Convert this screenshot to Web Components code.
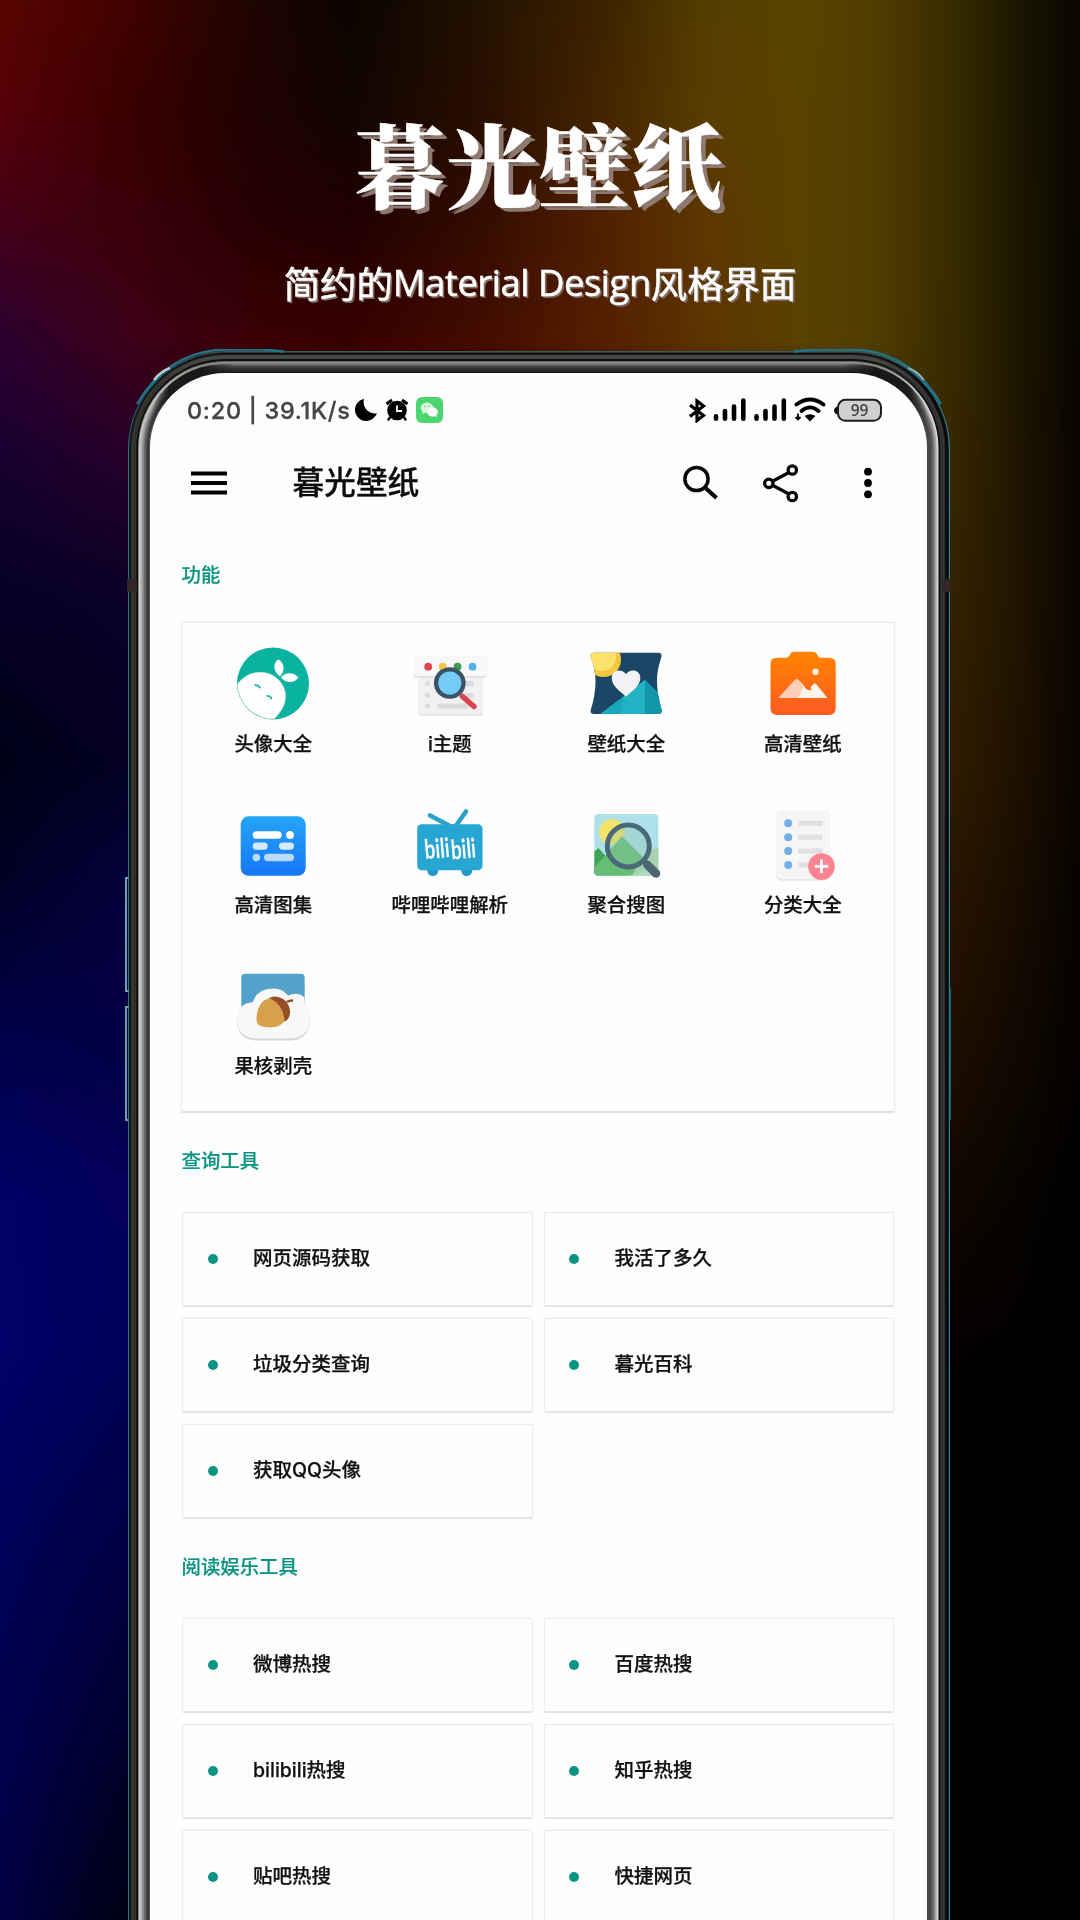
<!DOCTYPE html>
<html lang="zh-CN">
<head>
<meta charset="utf-8">
<title>暮光壁纸</title>
<style>
html,body{margin:0;padding:0;background:#000}
body{width:1080px;height:1920px;overflow:hidden;font-family:Inter,"Noto Sans CJK SC",sans-serif;color:#111}
</style>
</head>
<body>
<promo-page>
  <promo-title slot="title">暮光壁纸</promo-title>
  <promo-subtitle slot="subtitle"></promo-subtitle>
  <phone-frame slot="phone">
    <status-bar></status-bar>
    <app-bar>暮光壁纸</app-bar>
    <section-title style="--h:103px;--pad:44.5px">功能</section-title>
    <feature-card>
      <feature-item icon="avatar">头像大全</feature-item>
      <feature-item icon="theme">i主题</feature-item>
      <feature-item icon="wallpaper">壁纸大全</feature-item>
      <feature-item icon="hd">高清壁纸</feature-item>
      <feature-item icon="album">高清图集</feature-item>
      <feature-item icon="bili">哔哩哔哩解析</feature-item>
      <feature-item icon="search">聚合搜图</feature-item>
      <feature-item icon="list">分类大全</feature-item>
      <feature-item icon="acorn">果核剥壳</feature-item>
    </feature-card>
    <section-title style="--h:99px">查询工具</section-title>
    <tool-grid>
      <tool-card>网页源码获取</tool-card><tool-card>我活了多久</tool-card>
      <tool-card>垃圾分类查询</tool-card><tool-card>暮光百科</tool-card>
      <tool-card>获取QQ头像</tool-card>
    </tool-grid>
    <section-title style="--h:99px">阅读娱乐工具</section-title>
    <tool-grid>
      <tool-card>微博热搜</tool-card><tool-card>百度热搜</tool-card>
      <tool-card>bilibili热搜</tool-card><tool-card>知乎热搜</tool-card>
      <tool-card>贴吧热搜</tool-card><tool-card>快捷网页</tool-card>
    </tool-grid>
  </phone-frame>
</promo-page>
<script>
const define=(name,html,setup)=>customElements.define(name,class extends HTMLElement{
  constructor(){super();this.attachShadow({mode:'open'}).innerHTML=typeof html==='function'?html(this):html;if(setup)setup(this.shadowRoot,this);}
});

/* Aurora backdrop: colour samples on a coarse grid, smoothly interpolated */
const GX=[0,130,260,350,480,600,700,800,880,950,1020,1080];
const G=[
[0,'580400 400200 1c0500 0c0300 221200 3c2200 543c00 5a4400 4e3c00 382c00 1a1600 080600'],
[110,'560008 380000 1e0200 120500 280e00 442400 583c00 5a4200 4e3c00 382c00 1a1600 080600'],
[220,'440018 3a0008 260000 200000 340c00 502000 5c3600 5a4200 4e3c00 382c00 1c1600 080600'],
[340,'2c0030 3c0018 3a0004 380000 440c00 541e00 5c3400 5a4200 4e3c00 382a00 1c1600 080500'],
[450,'180030 280028 200010 200000 200000 200000 200000 200000 402c00 382800 1e1400 080400'],
[600,'040026 0a0028 0 0 0 0 0 0 302000 342200 201400 080400'],
[760,'000016 030024 0 0 0 0 0 0 281400 301c00 1e1000 080400'],
[900,'00002a 06003c 0 0 0 0 0 0 201000 281400 180c00 060200'],
[1050,'00004c 040046 0 0 0 0 0 0 180800 1e0e00 100700 040100'],
[1200,'000066 02005a 0 0 0 0 0 0 0c0400 100600 060300 000000'],
[1350,'000068 000058 0 0 0 0 0 0 0 040000 020000 0'],
[1500,'00005c 000048 0 0 0 0 0 0 0 0 0 0'],
[1700,'000050 000030 0 0 0 0 0 0 0 0 0 0'],
[1920,'000042 000012 0 0 0 0 0 0 0 0 0 0']
].map(([y,s])=>[y,s.split(' ').map(h=>{const n=parseInt(h,16);return[n>>16,(n>>8)&255,n&255];})]);
function paintAurora(cv){
  const w=cv.width,h=cv.height,k=1080/w,ctx=cv.getContext('2d'),im=ctx.createImageData(w,h);
  const at=(arr,v)=>{let i=0;while(i<arr.length-2&&v>=arr[i+1])i++;return[i,(v-arr[i])/(arr[i+1]-arr[i])];};
  const ys=G.map(g=>g[0]);
  for(let y=0;y<h;y++){const[j,v]=at(ys,y*k);
    for(let x=0;x<w;x++){const[i,u]=at(GX,x*k),o=(y*w+x)*4;
      for(let c=0;c<3;c++){
        const a=G[j][1][i][c]*(1-u)+G[j][1][i+1][c]*u,b=G[j+1][1][i][c]*(1-u)+G[j+1][1][i+1][c]*u;
        im.data[o+c]=a*(1-v)+b*v;}
      im.data[o+3]=255;}}
  ctx.putImageData(im,0,0);
}
define('promo-page',`<style>
:host{display:grid;width:1080px;height:1920px;overflow:hidden}
canvas,.col{grid-area:1/1;width:1080px;height:1920px}
.col{display:flex;flex-direction:column;align-items:center;z-index:1}
</style><canvas width="540" height="960"></canvas><div class="col"><slot name="title"></slot><slot name="subtitle"></slot><slot name="phone"></slot></div>`,
r=>paintAurora(r.querySelector('canvas')));

define('promo-title',`<style>
:host{display:block;height:115px;padding-top:105px;margin:0 2px 4px 0;font:900 90.500px/115px "Noto Serif CJK SC","Noto Sans CJK SC",serif;color:#fff;white-space:nowrap;letter-spacing:1.800px;-webkit-text-stroke:.6px #fff;text-shadow:5px 4px #8d7970,3px 3px rgba(141,121,112,.55)}
</style><slot></slot>`);
define('promo-subtitle',`<style>
:host{display:flex;height:46px;padding-top:35px;font:400 36.400px/46px "Noto Sans CJK SC",sans-serif;color:#fff;white-space:pre;-webkit-text-stroke:.5px #fff;text-shadow:1px 1px #8a7468,2px 2px #7a665c;margin-bottom:42px}
.en{font-family:"Open Sans","Noto Sans",sans-serif;letter-spacing:-.450px}
</style><span>简约的</span><span class="en">Material Design</span><span>风格界面</span>`);

/* Phone bezel: one filled contour per pixel ring, shaded [side left, top, side right] */
const L='2a7080 0a1416 161c1a 2a2c26 3a3a30 34332c 2e2c28 35332f 1a1818 050505 8a8a8a c8c8c8 bebebe aeaeae 9a9a9a 848484 6e6e6e 5c5c5c 4c4c4c 404040 343434 555555'.split(' ');
const T='405a58 303432 0a0a0a 202020 40403c 4a4a46 4a4a46 40403c 101010 0a0a0a 6a6a66 8a8c88 848682 70726e 5c5c5a 4a4a48 3c3c3c 343434 303030 2c2c2c 242424 141414'.split(' ');
const R='2f8296 0e2028 050507 0a0a0a 161616 333333 3a3a3a 262626 3a3a3a 1a1a1a 060606 e0e0e0 c8c8c8 acacac 929292 7a7a7a 666666 585858 4c4c4c 484848 464646 484848'.split(' ');
const bezel=()=>{
  let defs='',body='';
  for(let i=0;i<22;i++){
    const d=i>12?'<stop offset=".05" stop-color="#1c1c1c"/><stop offset=".09" stop-color="#161616"/>':'',
          e2=i>12?'<stop offset=".91" stop-color="#161616"/><stop offset=".95" stop-color="#1c1c1c"/>':'',
          s=i>12?'.028':'.03',t=i>12?'.972':'.97',m=i>12?.13:.09;
    defs+=`<linearGradient id="g${i}" gradientUnits="userSpaceOnUse" x1="128" x2="950" y1="0" y2="0"><stop offset="${s}" stop-color="#${L[i]}"/>${d}<stop offset="${m}" stop-color="#${T[i]}"/><stop offset="${1-m}" stop-color="#${T[i]}"/>${e2}<stop offset="${t}" stop-color="#${R[i]}"/></linearGradient>`;
    const x=128+i,y=351+i,e=950-i*23/22,r=98-i*1.1;
    body+=`<path d="M${x} 1930V${y+r}A${r} ${r} 0 0 1 ${x+r} ${y}H${e-r}A${r} ${r} 0 0 1 ${e} ${y+r}V1930Z" fill="url(#g${i})"/>`;
  }
  return `<svg width="1080" height="1571" viewBox="0 349 1080 1571"><defs>${defs}</defs>${body}
  <g fill="none" stroke="#1f7488" stroke-width="2.400"><path d="M137 404C159 367 190 349.500 228 349.500H264L284 351.500"/><path d="M941 404C919 367 888 349.500 850 349.500H814L794 351.500"/></g>
  <g fill="none" stroke="#6aa3ae" stroke-width="2" ><path d="M128.500 878H126V991H128.500M128.500 1007H126V1120H128.500"/></g>
  <path d="M154 380Q161 371 170 368" stroke="#b4cccf" stroke-width="2.500" fill="none"/><path d="M924 380Q917 371 908 368" stroke="#8fb4b8" stroke-width="2" fill="none"/>
  <path d="M127 579h10v13h-10zM943 579h7v13h-7z" fill="#332626"/>
  <path d="M950.500 988V1120" stroke="#1c5562" stroke-width="1.200"/></svg>`;
};
define('phone-frame',()=>`<style>
:host{display:grid;width:1080px;height:1571px;flex:none;margin-top:2px;grid-template-columns:150px 777px 153px;overflow:hidden}
svg{grid-area:1/1/2/4;display:block;overflow:visible}
.screen{grid-area:1/2;margin-top:24px;height:1547px;background:#fefefe;border-radius:75px 75px 0 0;z-index:1;overflow:hidden;display:flex;flex-direction:column}
</style>${bezel()}<div class="screen"><slot></slot></div>`);

define('status-bar',`<style>
:host{display:flex;height:74px;align-items:center;padding:0 44px 0 37px;box-sizing:border-box;flex:none;justify-content:space-between}
div{display:flex;align-items:center}
.t{font:500 23.500px/30px Inter,sans-serif;color:#444;width:168px;white-space:nowrap;letter-spacing:.700px;-webkit-text-stroke:.3px #444;padding-top:1px}
svg{display:block;flex:none}
</style>
<div><span class="t">0:20 | 39.1K/s</span>
<svg width="23" height="24" viewBox="0 0 23 24"><path d="M9 1C7 8 12 16 22 15.500C19 21 15 23 11 23C5 23 0 18 0 12C0 6 4 2 9 1Z" fill="#000"/></svg>
<svg style="margin-left:7px" width="24" height="24" viewBox="0 0 24 24"><circle cx="12" cy="12.500" r="9.800"/><path d="M1.500 6 7 2M22.500 6 17 2" stroke="#000" stroke-width="3"/><path d="M5 19 3 22.500M19 19l2 3.500" stroke="#000" stroke-width="2.500"/><path d="M12 7.500V13h5" stroke="#fff" stroke-width="1.800" fill="none"/></svg>
<svg style="margin-left:7px" width="27" height="26" viewBox="0 0 27 26"><rect width="27" height="26" rx="6" fill="#4bd66e"/><ellipse cx="11" cy="10.800" rx="6.300" ry="5.300" fill="#d9f8e0"/><path d="M7 14l-1 3 4-1.500z" fill="#d9f8e0"/><ellipse cx="16.500" cy="15" rx="5.400" ry="4.700" fill="#fff"/><path d="M18 18l3 2.500-.5-3.500z" fill="#fff"/><g fill="#4bd66e"><circle cx="9" cy="9.500" r=".8"/><circle cx="13" cy="9.500" r=".8"/></g></svg></div>
<div><svg width="195" height="26" viewBox="688 397 195 26">
<path d="M690 405 703.500 415.500 697 420.500V401L703.500 406 690 416.500" fill="none" stroke="#000" stroke-width="3.200"/>
<g stroke="#000" stroke-width="4.600" stroke-linecap="round"><path d="M716 416.200v2.500M725 411v7.700M734 406.500v12.200M743.300 400.500v18.200M756.500 416.200v2.500M765.500 411v7.700M774.500 406.500v12.200M783.800 400.500v18.200"/></g>
<g fill="none" stroke="#000" stroke-width="3.800" stroke-linecap="round"><path d="M796.500 404.500Q810 394.500 823.500 404.500M801.500 411Q810 403.800 818.500 411"/></g><path d="M804.500 416q5.500-3.500 11 0l-5.500 5.500z"/><path d="M798 413.500v5.500M795.500 417l2.500 2.500 2.500-2.500" stroke="#000" stroke-width="1.800" fill="none"/>
<path d="M839 406q-5 1-5 4.500t5 4.500z"/><rect x="838" y="399.800" width="43" height="21" rx="7.500" fill="#d0d0d0" stroke="#1c1c1c" stroke-width="2"/>
<text x="859.500" y="416" font-family="Open Sans,sans-serif" font-size="15.500" font-weight="600" text-anchor="middle" fill="#444">99</text></svg></div>`);

define('app-bar',`<style>
:host{display:flex;height:72px;align-items:center;padding-left:41px;flex:none}
span{font:500 31.700px/44px "Noto Sans CJK SC",sans-serif;color:#0c0c0c;margin-left:65.500px;width:390.500px;padding-bottom:6px;white-space:nowrap;-webkit-text-stroke:.3px #0c0c0c}
svg{display:block;flex:none}
</style>
<svg width="36" height="24" viewBox="0 0 36 24"><path d="M0 2.500h36M0 12h36M0 21.500h36" stroke="#000" stroke-width="3.800"/></svg>
<span><slot></slot></span>
<svg width="36" height="36" viewBox="683 465 36 36" fill="none" stroke="#080808"><circle cx="696.500" cy="479" r="11.600" stroke-width="3.500"/><path d="M704.500 487 716.500 498" stroke-width="4.200"/></svg>
<svg style="margin-left:43px" width="38" height="40" viewBox="762 463 38 40" fill="none" stroke="#080808" stroke-width="3.300"><path d="M773 481 788 473M773 485.500 788 493.500"/><circle cx="768.800" cy="483.300" r="4.200"/><circle cx="792.300" cy="470" r="4.200"/><circle cx="792.300" cy="496.500" r="4.200"/></svg>
<svg style="margin-left:63px" width="10" height="32" viewBox="0 0 10 32"><circle cx="5" cy="4.700" r="3.900"/><circle cx="5" cy="16" r="3.900"/><circle cx="5" cy="27.300" r="3.900"/></svg>`);

define('section-title',`<style>
:host{display:flex;height:var(--h);box-sizing:border-box;padding-left:31.500px;padding-top:calc(var(--pad,37px) - 4px);font:500 19.400px/28px "Noto Sans CJK SC",sans-serif;color:#0c9482;-webkit-text-stroke:.2px #0c9482;flex:none}
</style><slot></slot>`);

define('feature-card',`<style>
:host{display:grid;grid-template-columns:repeat(4,176.500px);grid-auto-rows:161px;height:491px;width:714px;box-sizing:border-box;margin-left:31px;padding:4px 2px 0 3px;background:#fefefe;border:1.500px solid #ececec;border-bottom:2px solid #e2e2e2;border-radius:2px;flex:none;box-shadow:0 0 2px #f1f1f1}
</style><slot></slot>`);

const icons={
avatar:`<circle cx="36" cy="35.500" r="36" fill="#0ab3a0"/><path d="M.5 36Q10 24 24 24.300C40 25 48.500 38 48.500 48C48.500 57 44 64 37 71A36 35.500 0 0 1 .5 36z" fill="#fff" stroke="#d7dcdc" stroke-width=".6"/><path d="M43 28.500C35.500 23 36 14 41.500 11.500C47.500 15 48.500 23 43 28.500zM44 29.500C49 23.500 57 24.500 61.500 29.500C57 35.500 49 35.500 44 29.500z" fill="#fff"/><path d="M17.500 37.200q4.500-.5 5.500 3M29.500 47.800q4.500 0 5 3.500" fill="none" stroke="#0ab3a0" stroke-width="1.600"/>`,
theme:`<rect x="4" y="28" width="65" height="40" rx="3" fill="#e6e6e6"/><rect x="4" y="26" width="65" height="40" rx="3" fill="#f1f1f1"/><path d="M-1 8H72.500V26q0 4-4 4H3q-4 0-4-4z" fill="#e2e2e2"/><path d="M-1 8H72.500V24q0 4-4 4H3q-4 0-4-4z" fill="#f8f8f8"/><g fill="#dcdcdc"><circle cx="13.500" cy="35.500" r="2.500"/><circle cx="13.500" cy="47" r="2.500"/><circle cx="13.500" cy="58" r="2.500"/><rect x="50" y="33" width="10" height="5" rx="2"/><rect x="50" y="45" width="10" height="5" rx="2"/><rect x="23" y="55.500" width="32" height="5" rx="2"/></g><circle cx="14.200" cy="18.700" r="3.900" fill="#db4452"/><circle cx="28.800" cy="18.700" r="3.900" fill="#f6c544"/><circle cx="43.500" cy="18.700" r="3.900" fill="#3f9c4b"/><circle cx="58.500" cy="18.700" r="3.900" fill="#4fb5e6"/><path d="M48.500 48.500 60 58.500" stroke="#da4450" stroke-width="5.500" stroke-linecap="round"/><circle cx="35.800" cy="35" r="13.700" fill="#74cbf6" stroke="#3c5366" stroke-width="4.300"/>`,
wallpaper:`<defs><clipPath id="c"><path d="M4 4.700H68.500Q72 4.700 71.500 8.500Q66.500 24 67 33Q67 47 71.700 62Q72 66 68.500 66H4Q0 66 .7 62Q5.500 47 5.500 33Q5.500 22 .7 8.500Q0 4.700 4 4.700z"/></clipPath></defs><g clip-path="url(#c)"><path d="M0 0h72v70H0z" fill="#1b4666"/><path d="M10 66 55 32 90 66z" fill="#18a8bc"/><path d="M35 47 55 32V66H29z" fill="#22b2c4"/><path d="M55 32 90 66H55z" fill="#1197aa"/><circle cx="13.500" cy="11.500" r="17.500" fill="#f2c63d"/><circle cx="12" cy="9" r="14" fill="#fce16b"/></g><path d="M36 48.700C30 43 21.700 38 21.700 30C21.700 22 31 20 36 26C41 20 50.300 22 50.300 30C50.300 38 42 43 36 48.700z" fill="#f2f1f6"/>`,
hd:`<defs><linearGradient id="o" x2="0" y2="1"><stop stop-color="#ff8500"/><stop offset="1" stop-color="#fb5a22"/></linearGradient></defs><path d="M10 9.700H19Q22 9.500 23 6.500T27 3.700H46Q49 3.700 50 6.500T54 9.700H62Q68.700 9.700 68.700 16V60Q68.700 67 62 67H10Q3.500 67 3.500 60V16Q3.500 9.700 10 9.700z" fill="url(#o)"/><circle cx="48.500" cy="23.700" r="3.200" fill="#fff0e4"/><path d="M11.500 50 27 33Q29.500 29.500 32.500 33L41 42 46 36.500Q48 34.500 50 37L60.500 50z" fill="#fff3ee"/><path d="M11.500 50 27 33Q29.500 29.500 32.500 33L37 37.500 31 50z" fill="#ffcdb8"/><path d="M42 35.500Q44 38 44.500 42.500Q39 42 37 38z" fill="#fd6d15"/>`,
album:`<defs><linearGradient id="b" x2="0" y2="1"><stop stop-color="#25a4f6"/><stop offset="1" stop-color="#1677f8"/></linearGradient></defs><rect x="3.700" y="7.300" width="65" height="59.500" rx="8" fill="url(#b)"/><g fill="#fff"><rect x="15.700" y="22.200" width="29" height="7.600" rx="3.800"/><circle cx="53" cy="26" r="3.900"/><g opacity=".82"><rect x="15.700" y="33.400" width="15" height="7.400" rx="3.700"/><rect x="42" y="33.400" width="15" height="7.400" rx="3.700"/></g><g opacity=".7"><circle cx="19.400" cy="48.500" r="3.800"/><rect x="27" y="44.700" width="30" height="7.500" rx="3.700"/></g></g>`,
bili:`<g stroke="#2aa0ca" stroke-width="4.600" stroke-linecap="round"><path d="M16 6.500 38 18M52 2.500 41 18"/></g><circle cx="18.800" cy="61.500" r="5.500" fill="#2398c4"/><circle cx="52.700" cy="61.500" r="5.500" fill="#2398c4"/><rect x="3.200" y="15.300" width="65.300" height="46" rx="4.500" fill="#27a5d3"/><g font-family="Lato,sans-serif" font-weight="700" fill="#fff"><text transform="rotate(-5 18 40)" x="10.500" y="49.500" font-size="27" textLength="25" lengthAdjust="spacingAndGlyphs">bili</text><text transform="rotate(-5 46 40)" x="36.800" y="49.700" font-size="27" textLength="25" lengthAdjust="spacingAndGlyphs">bili</text></g>`,
search:`<defs><clipPath id="s"><rect x="4.300" y="5" width="64" height="61.700" rx="4"/></clipPath></defs><g clip-path="url(#s)"><path d="M0 0h72v70H0z" fill="#aee1e8"/><circle cx="22" cy="23" r="12.800" fill="#f6e468"/><path d="M0 46 8.500 39 20 52 0 70z" fill="#43a454"/><path d="M0 64 32 27 70 66V70H0z" fill="#66bd74"/><path d="M50 52 62 41 72 36V70H40z" fill="#a5d2ae"/><path d="M24 70 72 59V70z" fill="#b4dcc0"/></g><circle cx="38.300" cy="37" r="21" fill="#8fbfae" fill-opacity=".35" stroke="#4a6a79" stroke-width="5"/><path d="M53 51 57 55" stroke="#4a6a79" stroke-width="6"/><path d="M57.500 56 66 64.500" stroke="#4d6472" stroke-width="8.500" stroke-linecap="round"/>`,
list:`<rect x="9.200" y="2" width="53.600" height="69.700" rx="5" fill="#e6e6e6"/><rect x="9.200" y="1" width="53.600" height="69" rx="5" fill="#f5f5f6"/><g fill="#72aee9"><circle cx="21.200" cy="14.300" r="4"/><circle cx="21.200" cy="28.300" r="4"/><circle cx="21.200" cy="42" r="4"/><circle cx="21.200" cy="56" r="4"/></g><path d="M31.500 14.300h24M31.500 28.300h24M31.500 42h24M31.500 56h18" stroke="#e0e0e2" stroke-width="5"/><circle cx="54.500" cy="57.500" r="13.300" fill="#fc8390"/><path d="M47.800 57.300h13.400M54.500 50.600V64" stroke="#fff" stroke-width="2.800"/>`,
acorn:`<path d="M8.300 3.700H63.700Q67.700 3.700 67.700 7.700V45H4.300V7.700Q4.300 3.700 8.300 3.700z" fill="#53a2c9"/><g fill="#d6d6d8" transform="translate(0 1.500)"><path d="M16 32Q20 18.500 36 18.500Q46 18.500 51 25.500Q61 21 67.500 27.500V33Q74 40 73.500 49Q71 69 53 69H20Q1 69-.5 49Q-.5 34 16 32z"/></g><path d="M16 32Q20 18.500 36 18.500Q46 18.500 51 25.500Q61 21 67.500 27.500V33Q74 40 73.500 49Q71 68.500 53 68.500H20Q1 68.500-.5 49Q-.5 34 16 32z" fill="#f8f8f9"/><path d="M35 27.500Q25 29 21.500 38Q18 48 20.500 53.500Q22 57 33 57.500Q43 57.500 47.500 51Q50 44 45 34z" fill="#d8a04a"/><path d="M32.500 28Q39 24.500 47 29.500Q54 36 53 43.500Q52 50 47.500 51.500Q47 35 32.500 28z" fill="#964e27"/><path d="M50 32.500Q51 30.500 56 30.500" fill="none" stroke="#964e27" stroke-width="2.600"/>`
};
define('feature-item',el=>`<style>
:host{display:flex;flex-direction:column;align-items:center;padding-top:20.500px;gap:9px;box-sizing:border-box;height:161px}
svg{display:block;overflow:visible;flex:none}
span{font:500 19.400px/30px Inter,"Noto Sans CJK SC",sans-serif;color:#101010;white-space:nowrap;-webkit-text-stroke:.25px #101010}
</style><svg width="72" height="72" viewBox="0 0 72 72">${icons[el.getAttribute('icon')]}</svg><span><slot></slot></span>`);

define('tool-grid',`<style>
:host{display:grid;grid-template-columns:350.500px 350.500px;grid-auto-rows:95px;gap:11px;margin-left:32px;flex:none}
</style><slot></slot>`);
define('tool-card',`<style>
:host{display:flex;align-items:center;box-sizing:border-box;padding:0 0 2px 24.500px;border:1.500px solid #ececec;border-bottom:2px solid #e4e4e4;background:#fefefe;border-radius:2px;font:500 19.500px/30px Inter,"Noto Sans CJK SC",sans-serif;color:#101010;white-space:nowrap;box-shadow:0 0 2px #f2f2f2;-webkit-text-stroke:.25px #101010}
i{width:10px;height:10px;border-radius:50%;background:#0c9482;margin:2px 35.500px 0 0}
</style><i></i><span><slot></slot></span>`);
</script>
</body>
</html>
